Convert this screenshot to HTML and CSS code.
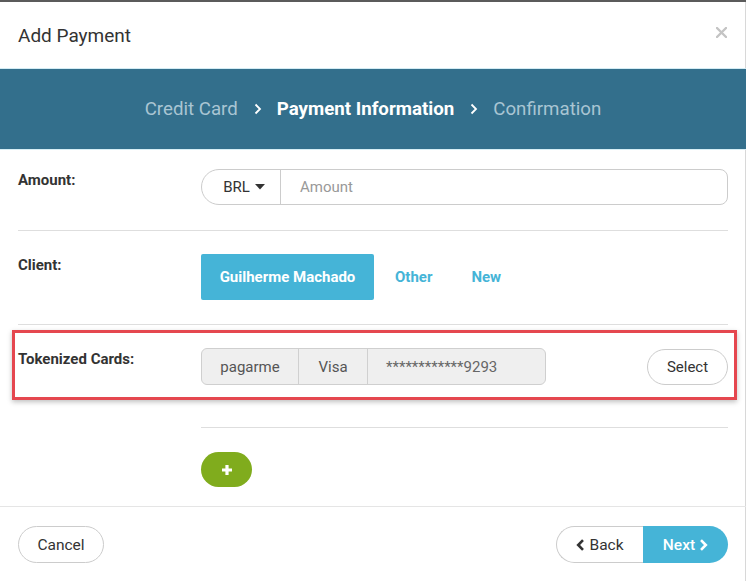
FILE: index.html
```html
<!DOCTYPE html>
<html lang="en">
<head>
<meta charset="utf-8">
<title>Add Payment</title>
<link rel="stylesheet" href="styles.css">
</head>
<body>
<div class="modal">
  <header class="modal-header">
    <h1 class="title">Add Payment</h1>
    <button class="close" aria-label="Close">
      <svg width="11" height="11" viewBox="0 0 11 11"><path d="M1 1L10 10M10 1L1 10" stroke="#c4c4c4" stroke-width="2.4" stroke-linecap="round"/></svg>
    </button>
  </header>
  <nav class="steps">
    <span class="step">Credit Card</span>
    <svg class="sep" width="8" height="12" viewBox="0 0 8 12"><path d="M1.5 1.5L6 6L1.5 10.5" fill="none" stroke="#fff" stroke-width="1.8"/></svg>
    <span class="step active">Payment Information</span>
    <svg class="sep" width="8" height="12" viewBox="0 0 8 12"><path d="M1.5 1.5L6 6L1.5 10.5" fill="none" stroke="#fff" stroke-width="1.8"/></svg>
    <span class="step">Confirmation</span>
  </nav>
  <main class="form">
    <div class="row bordered row-amount">
      <div class="label">Amount:</div>
      <div class="field">
        <div class="amount-group">
          <span class="currency">BRL <svg width="10" height="6" viewBox="0 0 10 6"><path d="M0 0H10L5 5.5Z" fill="#333"/></svg></span>
          <span class="placeholder">Amount</span>
        </div>
      </div>
    </div>
    <div class="row bordered row-client">
      <div class="label">Client:</div>
      <div class="field client-opts">
        <span class="btn-client">Guilherme Machado</span>
        <span class="link">Other</span>
        <span class="link">New</span>
      </div>
    </div>
    <div class="row row-cards">
      <div class="label">Tokenized Cards:</div>
      <div class="field cards-field">
        <div class="card-group">
          <span class="seg seg-gw">pagarme</span>
          <span class="seg seg-brand">Visa</span>
          <span class="seg seg-num">************9293</span>
        </div>
        <span class="btn-select">Select</span>
      </div>
    </div>
    <div class="row row-add">
      <div class="label"></div>
      <div class="field add-field">
        <span class="btn-add">
          <svg width="12" height="12" viewBox="0 0 12 12"><path d="M6 1V11M1 6H11" stroke="#fff" stroke-width="3.2"/></svg>
        </span>
      </div>
    </div>
  </main>
  <footer class="modal-footer">
    <span class="btn btn-cancel">Cancel</span>
    <div class="nav-btns">
      <span class="btn btn-back"><svg width="9" height="12" viewBox="0 0 9 12"><path d="M7 1.2L2.2 6L7 10.8" fill="none" stroke="#333" stroke-width="2.6"/></svg>Back</span>
      <span class="btn btn-next">Next<svg width="9" height="12" viewBox="0 0 9 12"><path d="M2 1.2L6.8 6L2 10.8" fill="none" stroke="#fff" stroke-width="2.6"/></svg></span>
    </div>
  </footer>
</div>
</body>
</html>
```

FILE: styles.css
```css
*, *::before, *::after { box-sizing: border-box; }
html, body { margin: 0; padding: 0; background: #fff; }
body {
  font-family: Roboto, "Liberation Sans", Arial, sans-serif;
  color: #333;
  width: 746px;
  height: 581px;
  overflow: hidden;
}
.modal {
  border-top: 2px solid #5b5b5b;
  box-shadow: inset -1px 0 0 #d8d8d8;
  height: 581px;
  display: flex;
  flex-direction: column;
}
.modal-header {
  height: 67px;
  display: flex;
  align-items: center;
  justify-content: space-between;
  padding: 0 19px 0 18px;
  border-bottom: 1px solid #d3ecf4;
}
.title {
  margin: 0;
  font-size: 19px;
  font-weight: 400;
  color: #333;
}
.close {
  border: 0;
  background: none;
  padding: 0;
  margin-top: -6px;
  display: flex;
}
.steps {
  height: 81px;
  background: #336f8c;
  border-bottom: 1px solid #d6eef5;
  display: flex;
  align-items: center;
  justify-content: center;
  font-size: 18.7px;
}
.step { color: #a9c5d3; }
.step.active { color: #fff; font-weight: 700; }
.sep { margin: 0 15px 0 16px; }
.form { padding: 0 18px; flex: 1; }
.row {
  display: grid;
  grid-template-columns: 183px 1fr;
}
.bordered { border-bottom: 1px solid #dedede; }
.label {
  font-size: 15px;
  font-weight: 700;
  line-height: 20px;
  padding-top: 1px;
  color: #333;
}
.row-amount { padding: 19px 0 25px; }
.row-client { padding: 23px 0 24px; }
.row-cards { padding: 23px 0 42px; position: relative; }
.row-cards::after {
  content: "";
  position: absolute;
  left: -6px;
  right: -9px;
  top: 5px;
  height: 70px;
  border: 3px solid #e5474f;
  box-shadow: 0 2px 5px rgba(0,0,0,0.25);
  pointer-events: none;
}
.amount-group {
  display: flex;
  height: 36px;
  border: 1px solid #ccc;
  border-radius: 18px 8px 8px 18px;
  font-size: 15px;
  align-items: stretch;
}
.currency {
  width: 79px;
  display: flex;
  align-items: center;
  justify-content: center;
  gap: 5px;
  border-right: 1px solid #ccc;
  padding-left: 6px;
  color: #333;
}
.placeholder {
  display: flex;
  align-items: center;
  padding-left: 19px;
  color: #999;
}
.client-opts {
  display: flex;
  align-items: center;
  font-size: 15px;
  font-weight: 700;
}
.btn-client {
  height: 46px;
  width: 173px;
  background: #45b4d7;
  color: #fff;
  display: flex;
  align-items: center;
  justify-content: center;
  border-radius: 2px;
}
.link { color: #45b4d7; margin-left: 21px; }
.link + .link { margin-left: 39px; }
.cards-field {
  display: flex;
  align-items: center;
  justify-content: space-between;
}
.card-group {
  display: flex;
  height: 37px;
  background: #efefef;
  border: 1px solid #cfcfcf;
  border-radius: 6px;
  font-size: 15px;
  color: #555;
}
.seg {
  display: flex;
  align-items: center;
  justify-content: center;
}
.seg-gw { width: 97px; border-right: 1px solid #d0d0d0; }
.seg-brand { width: 69px; border-right: 1px solid #d0d0d0; }
.seg-num { width: 177px; justify-content: flex-start; padding-left: 18px; color: #666; }
.btn-select {
  height: 36px;
  width: 81px;
  border: 1px solid #ccc;
  border-radius: 18px;
  display: flex;
  align-items: center;
  justify-content: center;
  font-size: 15px;
  color: #333;
}
.row-add { padding: 0 0 19px; }
.add-field { border-top: 1px solid #dedede; padding-top: 24px; }
.btn-add {
  width: 51px;
  height: 35px;
  border-radius: 18px;
  background: #80ac1d;
  display: flex;
  align-items: center;
  justify-content: center;
}
.modal-footer {
  border-top: 1px solid #e5e5e5;
  padding: 19px 18px 0;
  height: 75px;
  display: flex;
  justify-content: space-between;
  align-items: flex-start;
}
.btn {
  height: 37px;
  display: flex;
  align-items: center;
  justify-content: center;
  font-size: 15.5px;
  color: #333;
  gap: 4px;
}
.btn-cancel {
  width: 86px;
  border: 1px solid #ccc;
  border-radius: 19px;
}
.nav-btns { display: flex; }
.btn-back {
  width: 87px;
  border: 1px solid #ccc;
  border-right: 0;
  border-radius: 19px 0 0 19px;
}
.btn-next {
  width: 85px;
  background: #45b4d7;
  color: #fff;
  font-weight: 500;
  border-radius: 0 19px 19px 0;
}
```
